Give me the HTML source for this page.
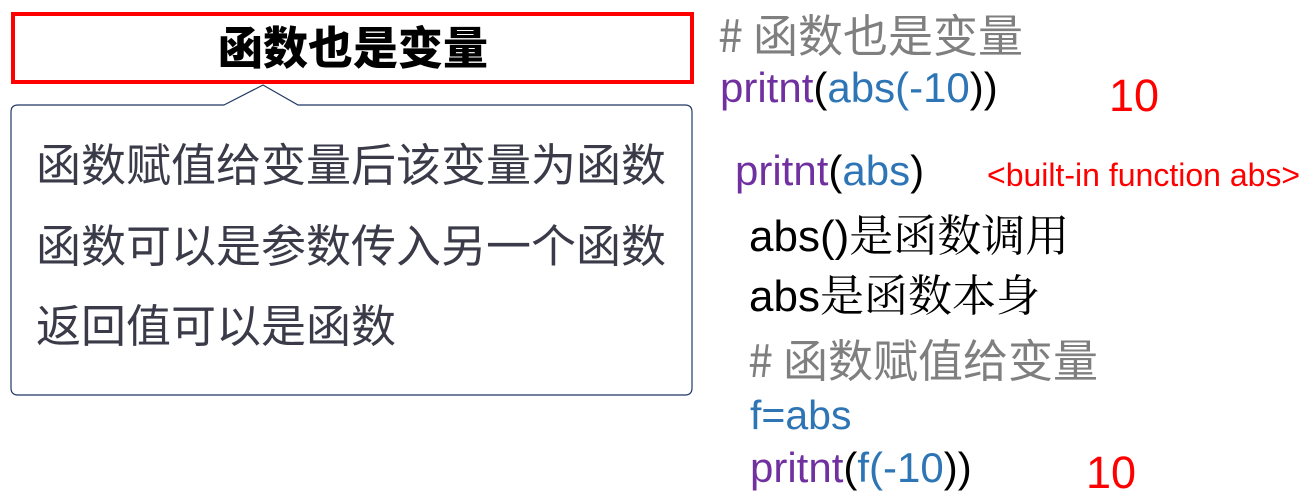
<!DOCTYPE html>
<html><head><meta charset="utf-8"><style>
body{margin:0;width:1305px;height:499px;background:#fff;position:relative;overflow:hidden;font-family:"Liberation Sans","Noto Sans CJK SC",sans-serif;}
.a{position:absolute;white-space:nowrap;line-height:1;}
.p{color:#7030a0}.b{color:#2e75b6}.k{color:#000}.g{color:#7f7f7f}.r{color:#ff0000}
</style></head><body>
<div style="position:absolute;left:11px;top:12px;width:675px;height:64px;border:4px solid #ff0000;"></div>
<div class="a" style="left:218px;top:22px;font-size:45px;font-weight:900;font-family:'Noto Sans CJK SC',sans-serif;color:#000;">函数也是变量</div>
<svg style="position:absolute;left:0;top:0" width="700" height="400">
<path d="M224 105 L263 85 L298 105 L685 105 Q692 105 692 112 L692 388 Q692 395 685 395 L18 395 Q11 395 11 388 L11 112 Q11 105 18 105 Z" fill="#fff" stroke="#1f3864" stroke-width="1.2"/>
</svg>
<div class="a" style="left:36px;top:139px;font-size:45px;color:#3a3a48;font-family:'Noto Sans CJK SC',sans-serif;">函数赋值给变量后该变量为函数</div>
<div class="a" style="left:36px;top:220px;font-size:45px;color:#3a3a48;font-family:'Noto Sans CJK SC',sans-serif;">函数可以是参数传入另一个函数</div>
<div class="a" style="left:36px;top:300px;font-size:45px;color:#3a3a48;font-family:'Noto Sans CJK SC',sans-serif;">返回值可以是函数</div>

<div class="a g" style="left:718px;top:10px;font-size:45px;font-family:'Noto Sans CJK SC',sans-serif;"># 函数也是变量</div>
<div class="a" style="left:720px;top:67px;font-size:42px;"><span class="p">pritnt</span><span class="k">(</span><span class="b">abs(-10</span><span class="k">))</span></div>
<div class="a r" style="left:1109px;top:73px;font-size:45px;">10</div>
<div class="a" style="left:735px;top:150px;font-size:42px;"><span class="p">pritnt</span><span class="k">(</span><span class="b">abs</span><span class="k">)</span></div>
<div class="a r" style="left:987px;top:159px;font-size:32px;">&lt;built-in function abs&gt;</div>
<div class="a k" style="left:749px;top:215px;font-size:44px;font-family:'Liberation Sans','Noto Serif CJK SC',serif;">abs()是函数调用</div>
<div class="a k" style="left:749px;top:275px;font-size:44px;font-family:'Liberation Sans','Noto Serif CJK SC',serif;">abs是函数本身</div>
<div class="a g" style="left:748px;top:335px;font-size:45px;font-family:'Noto Sans CJK SC',sans-serif;"># 函数赋值给变量</div>
<div class="a b" style="left:750px;top:395px;font-size:41px;">f=abs</div>
<div class="a" style="left:750px;top:447px;font-size:42px;"><span class="p">pritnt</span><span class="k">(</span><span class="b">f(-10</span><span class="k">))</span></div>
<div class="a r" style="left:1086px;top:450px;font-size:45px;">10</div>
</body></html>
